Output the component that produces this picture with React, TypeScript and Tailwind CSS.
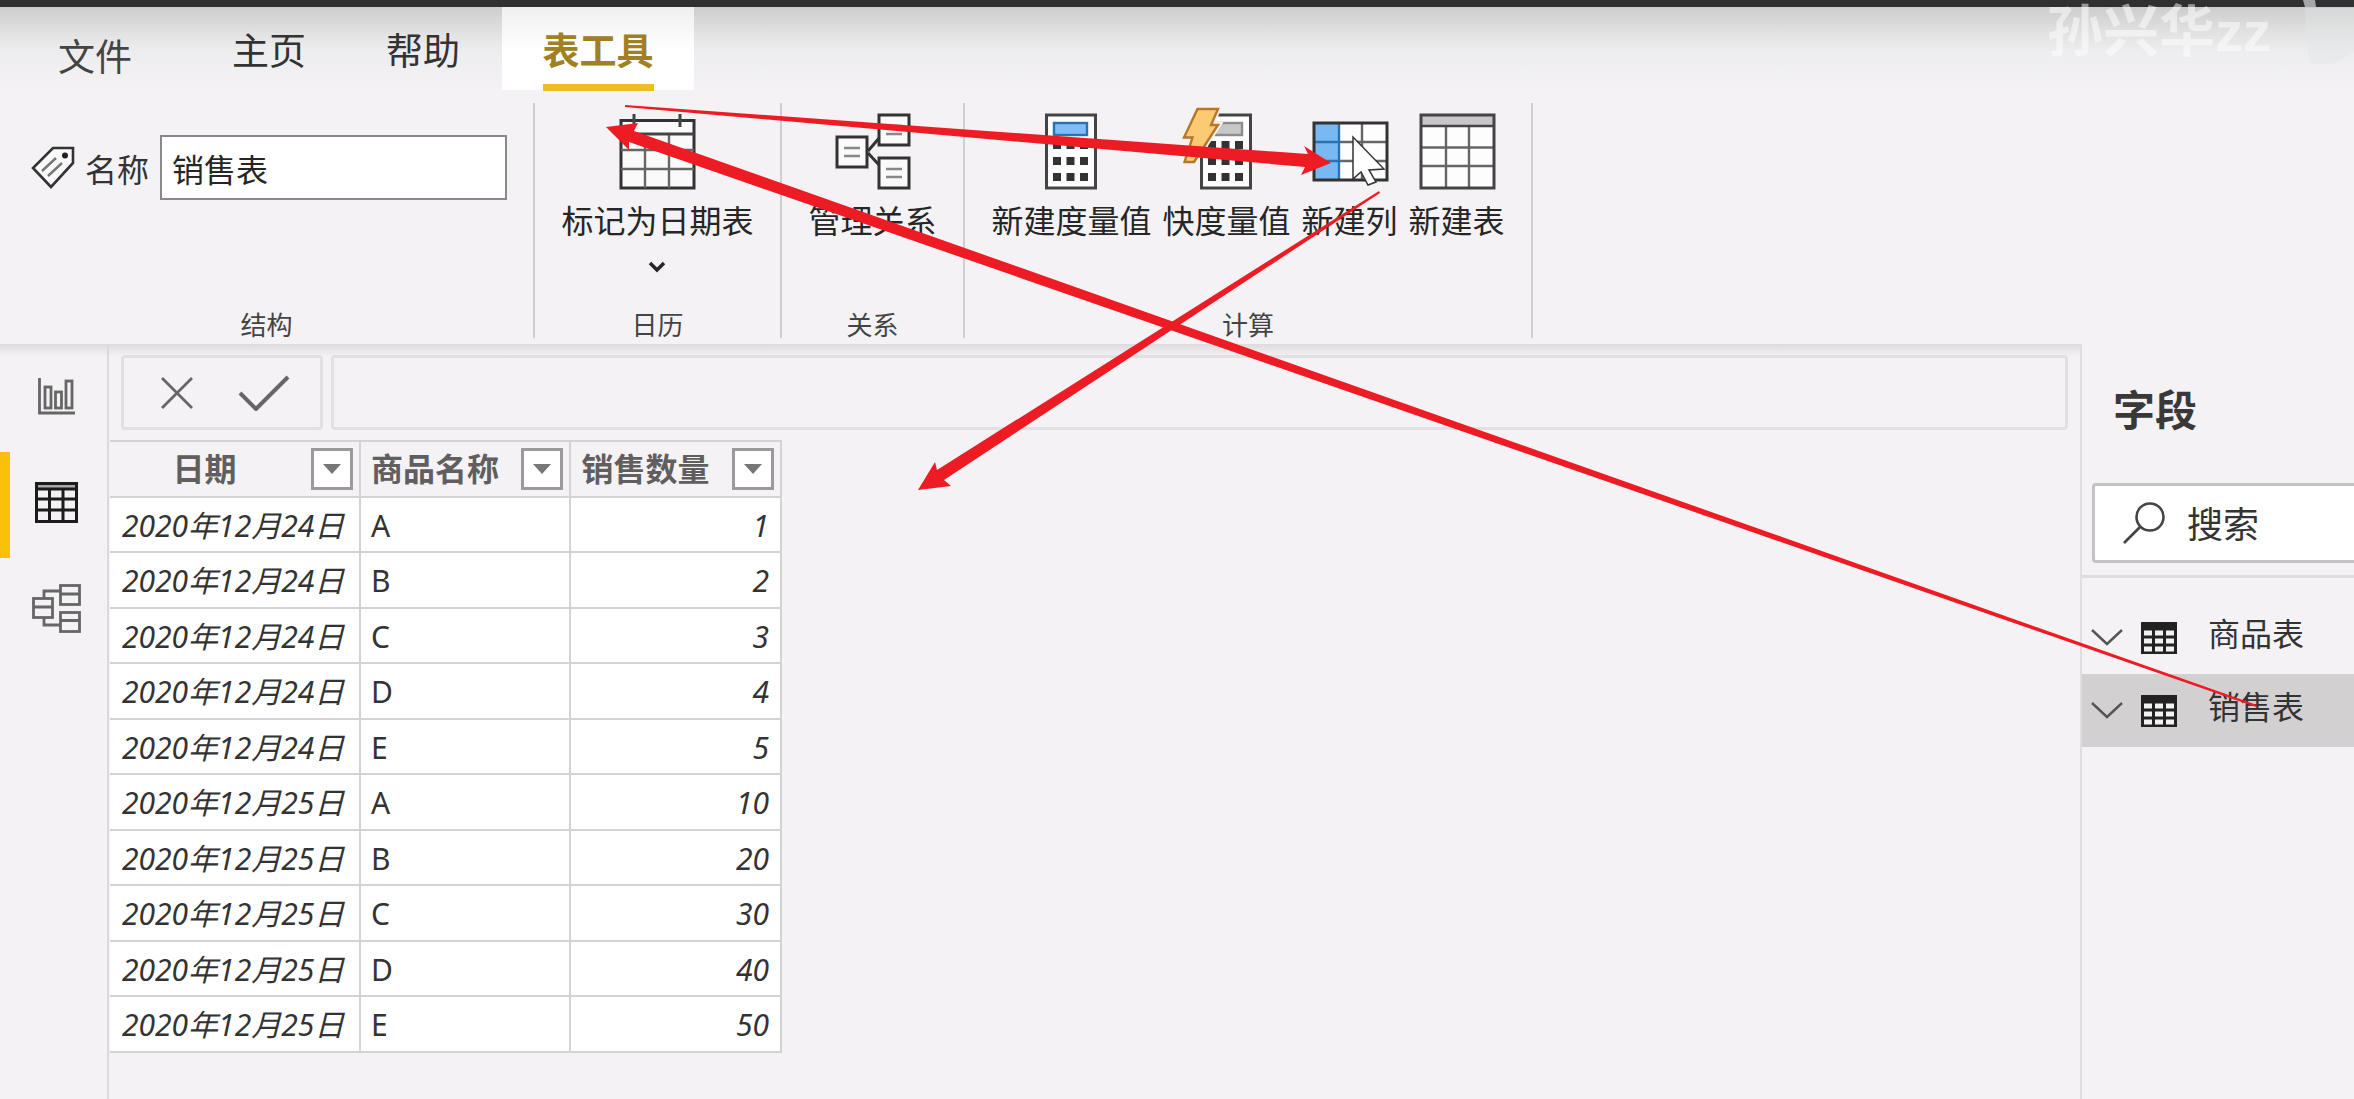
import type { ReactNode } from 'react';

const CJK = "font-['Noto_Sans_CJK_SC',sans-serif]";

const rows: [string, string, number][] = [
  ['2020年12月24日', 'A', 1],
  ['2020年12月24日', 'B', 2],
  ['2020年12月24日', 'C', 3],
  ['2020年12月24日', 'D', 4],
  ['2020年12月24日', 'E', 5],
  ['2020年12月25日', 'A', 10],
  ['2020年12月25日', 'B', 20],
  ['2020年12月25日', 'C', 30],
  ['2020年12月25日', 'D', 40],
  ['2020年12月25日', 'E', 50],
];

const columns = [
  { title: '日期', width: 'w-[251px]' },
  { title: '商品名称', width: 'w-[210px]' },
  { title: '销售数量', width: 'w-[211px]' },
];

/* ---------- ribbon icons, all on a 76px square ---------- */

function RibbonIcon({ children }: { children: ReactNode }) {
  return (
    <svg viewBox="0 0 76 76" className="size-[76px] shrink-0 overflow-visible" fill="none" aria-hidden="true">
      {children}
    </svg>
  );
}

function CalendarIcon() {
  return (
    <RibbonIcon>
      <rect x="2" y="7.5" width="73" height="67.5" fill="#fbfafb" stroke="#333" strokeWidth="3" />
      <path d="M26 21v54M50 21v54M2 37h73M2 56h73" stroke="#666" strokeWidth="2.4" />
      <path d="M2 21h73" stroke="#444" strokeWidth="3" />
      <path d="M15 1v13M61 1v13" stroke="#444" strokeWidth="3" />
    </RibbonIcon>
  );
}

function RelationsIcon() {
  return (
    <RibbonIcon>
      <path d="M34 38 46 24M34 40l12 13" stroke="#333" strokeWidth="3" />
      <g fill="#fbfafb" stroke="#333" strokeWidth="3">
        <rect x="3" y="24" width="30" height="30" />
        <rect x="45" y="2" width="30" height="30" />
        <rect x="45" y="45" width="30" height="30" />
      </g>
      <path d="M10 35h16M10 43h16M52 13h16M52 21h16M52 56h16M52 64h16" stroke="#888" strokeWidth="2.6" />
    </RibbonIcon>
  );
}

function CalculatorBody({ screen, border }: { screen: string; border: string }) {
  return (
    <>
      <rect x="13.5" y="2" width="49" height="73" fill="#fdfdfd" stroke="#444" strokeWidth="3" />
      <rect x="21" y="10" width="33" height="12" fill={screen} stroke={border} strokeWidth="2.4" />
      {[28, 44, 60].map((y) =>
        [20, 33.5, 47].map((x) => <rect key={`${x}-${y}`} x={x} y={y} width="8" height="8" fill="#333" />),
      )}
    </>
  );
}

function MeasureIcon() {
  return (
    <RibbonIcon>
      <CalculatorBody screen="#80bdf8" border="#2a72b0" />
    </RibbonIcon>
  );
}

function QuickMeasureIcon() {
  const bolt = 'M9.5-4H30L23 12h7L6 49h-9.5L4.5 24.500H-4z';
  return (
    <RibbonIcon>
      <CalculatorBody screen="#c8c8c8" border="#8c8c8c" />
      <path d={bolt} stroke="#f6f3f2" strokeWidth="6" />
      <path d={bolt} fill="#fdca74" stroke="#b9752a" strokeWidth="2.4" />
    </RibbonIcon>
  );
}

function NewColumnIcon() {
  return (
    <RibbonIcon>
      <rect x="2" y="10" width="73" height="57" fill="#fdfdfd" />
      <rect x="2" y="10" width="25" height="57" fill="#79b9f2" />
      <path d="M50 10v57M27 29h48M27 48h48" stroke="#666" strokeWidth="2.4" />
      <path d="M27 10v57M2 29h25M2 48h25" stroke="#2a72b0" strokeWidth="2.4" />
      <rect x="2" y="10" width="73" height="57" stroke="#333" strokeWidth="3" />
    </RibbonIcon>
  );
}

function NewTableIcon() {
  return (
    <RibbonIcon>
      <rect x="2" y="2" width="73" height="73" fill="#fdfdfd" />
      <rect x="2" y="2" width="73" height="11" fill="#c8c6c8" />
      <path d="M27 13v62M50 13v62M2 34.5h73M2 53h73" stroke="#666" strokeWidth="2.4" />
      <path d="M2 13h73" stroke="#444" strokeWidth="2.4" />
      <rect x="2" y="2" width="73" height="73" stroke="#444" strokeWidth="3" />
    </RibbonIcon>
  );
}

function TagIcon() {
  return (
    <svg viewBox="0 0 44 43" className="h-[43px] w-[44px] shrink-0" fill="none" aria-hidden="true">
      <path d="M22 2h20v15L20 41 2 22z" fill="#fbfafb" stroke="#333" strokeWidth="2.6" />
      <circle cx="34" cy="9.5" r="3" fill="#222" />
      <path d="M11 25 25 12M17 30l14-13" stroke="#777" strokeWidth="2.4" />
    </svg>
  );
}

/* ---------- side bar icons ---------- */

function ReportIcon() {
  return (
    <svg viewBox="0 0 37 37" className="size-[37px]" fill="none" stroke="#666" strokeWidth="2.8" aria-hidden="true">
      <path d="M1.500 0v35H37" />
      <rect x="7" y="9" width="6" height="21" />
      <rect x="17.5" y="14" width="6" height="16" />
      <rect x="28" y="3" width="6" height="27" />
    </svg>
  );
}

function DataIcon() {
  return (
    <svg viewBox="0 0 43 41" className="h-[41px] w-[43px]" fill="none" stroke="#1c1c1c" strokeWidth="3" aria-hidden="true">
      <rect x="2" y="2" width="39" height="5" fill="#aaa" stroke="none" />
      <rect x="1.5" y="1.5" width="40" height="38" />
      <path d="M1 7h41M1 17h41M1 28h41M14.500 7v33M28 7v33" />
    </svg>
  );
}

function ModelIcon() {
  return (
    <svg viewBox="0 0 49 49" className="size-[49px]" fill="none" stroke="#666" strokeWidth="2.8" aria-hidden="true">
      <rect x="1.5" y="14.5" width="19" height="19" />
      <rect x="28.5" y="1.5" width="19" height="19" />
      <rect x="28.5" y="28.5" width="19" height="19" />
      <path d="M1 23h20M28 10h20M28 36.500h20M12 14V7h16M12 34v7h16" />
    </svg>
  );
}

/* ---------- ribbon ---------- */

function RibbonGroup({ name, width, children }: { name: string; width: string; children: ReactNode }) {
  return (
    <section aria-label={name} className={`flex flex-col border-r-2 border-[#cfcdcf] ${width}`}>
      {children}
      <h2 className="mt-auto text-center text-[26px] leading-7 text-[#444]">{name}</h2>
    </section>
  );
}

function RibbonButton({ label, icon, menu }: { label: string; icon: ReactNode; menu?: boolean }) {
  return (
    <button type="button" className="flex flex-col items-center whitespace-nowrap text-[32px] leading-10 text-[#262626]">
      {icon}
      <span className="mt-[10px]">{label}</span>
      {menu && (
        <svg viewBox="0 0 18 12" className="mt-[22px] h-3 w-[18px]" fill="none" stroke="#262626" strokeWidth="3.5" aria-hidden="true">
          <path d="m2 2 7 7 7-7" />
        </svg>
      )}
    </button>
  );
}

function Header() {
  return (
    <header className="bg-[linear-gradient(to_bottom,#cecdce,#e3e2e3_26px,#edecee_44px,#f4f2f4_84px)]">
      <nav aria-label="功能区" className="flex h-[83px] items-stretch pl-[58px] text-[37px] leading-[44px] text-[#333]">
        <button type="button" className="pt-3 text-[#444]">文件</button>
        <button type="button" className="ml-[100px]">主页</button>
        <button type="button" className="ml-20">帮助</button>
        <button
          type="button"
          className="ml-[42px] flex w-[192px] flex-col items-center bg-[linear-gradient(to_bottom,#efefef,#ffffff_44px)] pt-5 font-bold text-[#a08020]"
        >
          表工具
          <span className="mt-[13px] h-[7px] w-[111px] shrink-0 bg-[#efbd22]" />
        </button>
      </nav>
      <div className="flex h-[254px] pt-[13px] pb-[6px]">
        <RibbonGroup name="结构" width="w-[535px]">
          <div className="mt-8 flex items-center pl-[31px] text-[32px] text-[#333]">
            <TagIcon />
            <label htmlFor="table-name" className="ml-[10px]">名称</label>
            <input
              id="table-name"
              defaultValue="销售表"
              className="ml-[11px] h-[65px] w-[347px] border-2 border-[#8a8889] bg-white pl-[10px] text-[#262626] outline-none"
            />
          </div>
        </RibbonGroup>
        <RibbonGroup name="日历" width="w-[247px]">
          <div className="flex justify-center pt-[10px]">
            <RibbonButton label="标记为日期表" icon={<CalendarIcon />} menu />
          </div>
        </RibbonGroup>
        <RibbonGroup name="关系" width="w-[183px]">
          <div className="flex justify-center pt-[10px]">
            <RibbonButton label="管理关系" icon={<RelationsIcon />} />
          </div>
        </RibbonGroup>
        <RibbonGroup name="计算" width="w-[568px]">
          <div className="flex justify-center gap-[11px] pt-[10px]">
            <RibbonButton label="新建度量值" icon={<MeasureIcon />} />
            <RibbonButton label="快度量值" icon={<QuickMeasureIcon />} />
            <RibbonButton label="新建列" icon={<NewColumnIcon />} />
            <RibbonButton label="新建表" icon={<NewTableIcon />} />
          </div>
        </RibbonGroup>
      </div>
    </header>
  );
}

/* ---------- body ---------- */

function SideBar() {
  const item = 'flex h-[106px] items-center border-l-[10px] pr-1 pb-[6px] justify-center';
  return (
    <nav aria-label="视图" className="flex w-[109px] shrink-0 flex-col border-r-2 border-[#dbd9db] pt-[2px]">
      <button type="button" aria-label="报表" className={`${item} border-transparent`}><ReportIcon /></button>
      <button type="button" aria-label="数据" className={`${item} border-[#f9c10c]`}><DataIcon /></button>
      <button type="button" aria-label="模型" className={`${item} border-transparent`}><ModelIcon /></button>
    </nav>
  );
}

function FormulaBar() {
  return (
    <div className="flex h-[75px] gap-2 px-3">
      <div className="flex w-[202px] shrink-0 items-center rounded-sm border-[3px] border-[#e2e0e2] bg-[#f4f2f4] pl-9">
        <button type="button" aria-label="取消">
          <svg viewBox="0 0 34 34" className="size-[34px]" fill="none" stroke="#666" strokeWidth="2.8" aria-hidden="true">
            <path d="m2 2 30 30M32 2 2 32" />
          </svg>
        </button>
        <button type="button" aria-label="提交" className="ml-11">
          <svg viewBox="0 0 52 36" className="h-9 w-[52px]" fill="none" stroke="#666" strokeWidth="4" aria-hidden="true">
            <path d="m2 18 16 16L50 2" />
          </svg>
        </button>
      </div>
      <input aria-label="公式" className="min-w-0 flex-1 rounded-sm border-[3px] border-[#e2e0e2] bg-[#f4f2f4] px-3 text-[30px] outline-none" />
    </div>
  );
}

function DataTable() {
  return (
    <table className="mt-[10px] ml-px w-[672px] table-fixed border-separate border-spacing-0 border-t-2 border-[#d5d2d5] font-['Noto_Sans','Noto_Sans_CJK_SC',sans-serif] text-[30px] leading-10 text-[#333]">
      <thead>
        <tr>
          {columns.map((c) => (
            <th key={c.title} className={`h-14 border-r-2 border-b-2 border-[#d5d2d5] p-0 ${c.width}`}>
              <div className="flex items-center pr-[6px] pl-[10px] font-['Noto_Sans_CJK_SC',sans-serif] text-[32px] text-[#605e5e]">
                <span className="flex-1 pb-1 text-center whitespace-nowrap">{c.title}</span>
                <button
                  type="button"
                  aria-label={`筛选${c.title}`}
                  className="ml-[22px] flex size-[42px] shrink-0 items-center justify-center border-[3px] border-[#9b999b] bg-white"
                >
                  <svg viewBox="0 0 18 10" className="h-[10px] w-[18px]" fill="#777" aria-hidden="true">
                    <path d="M0 0h18L9 10z" />
                  </svg>
                </button>
              </div>
            </th>
          ))}
        </tr>
      </thead>
      <tbody>
        {rows.map(([date, product, amount], i) => (
          <tr key={i} className="bg-white odd:h-[55px] even:h-14">
            <td className="border-r-2 border-b-2 border-[#d5d2d5] pt-[2px] pr-0 pb-0 pl-3 whitespace-nowrap italic">{date}</td>
            <td className="border-r-2 border-b-2 border-[#d5d2d5] pt-[2px] pr-0 pb-0 pl-[10px]">{product}</td>
            <td className="border-r-2 border-b-2 border-[#d5d2d5] pt-[2px] pr-[11px] pb-0 pl-0 text-right italic">{amount}</td>
          </tr>
        ))}
      </tbody>
    </table>
  );
}

function FieldItem({ name, selected }: { name: string; selected?: boolean }) {
  return (
    <li className={selected ? 'bg-[#d3d0d2]' : ''}>
      <button type="button" className="flex h-[73px] w-full items-center pb-[6px] pl-[9px] text-left text-[32px] leading-10 text-[#333]">
        <svg viewBox="0 0 32 17" className="mt-[5px] h-[17px] w-8" fill="none" stroke="#555" strokeWidth="2.4" aria-hidden="true">
          <path d="m1 1 15 14L31 1" />
        </svg>
        <svg viewBox="0 0 36 32" className="mt-[6px] ml-[18px] h-8 w-9" aria-hidden="true">
          <rect width="36" height="32" fill="#222" />
          {[8.5, 16.5, 24.5].map((y) =>
            [3, 14, 25].map((x) => <rect key={`${x}-${y}`} x={x} y={y} width="8" height="5" fill="#f3f1f3" />),
          )}
        </svg>
        <span className="ml-[31px] pb-[6px]">{name}</span>
      </button>
    </li>
  );
}

function FieldsPane() {
  return (
    <aside className="w-[274px] shrink-0 overflow-hidden border-l-2 border-[#e0dee0] bg-[#f4f2f4]">
      <h2 className="mt-9 ml-[31px] text-[42px] leading-[56px] font-bold text-[#3b3938]">字段</h2>
      <label className="mt-[47px] ml-[10px] flex h-20 items-center rounded-l border-[3px] border-r-0 border-[#c5c2c4] bg-white pl-7">
        <svg viewBox="0 0 42 42" className="size-[42px] shrink-0" fill="none" stroke="#444" strokeWidth="2.6" aria-hidden="true">
          <circle cx="27" cy="15" r="13.5" />
          <path d="M17.500 24.500 1 41" />
        </svg>
        <input
          type="search"
          aria-label="搜索"
          placeholder="搜索"
          className="mb-[2px] ml-[22px] h-14 w-full min-w-0 bg-transparent text-[36px] outline-none placeholder:text-[#333]"
        />
      </label>
      <ul className="mt-3 border-t-[3px] border-[#dfdddf] pt-[23px]">
        <FieldItem name="商品表" />
        <FieldItem name="销售表" selected />
      </ul>
    </aside>
  );
}

/* ---------- annotations drawn over the window ---------- */

function Annotations() {
  return (
    <svg viewBox="0 0 2354 1099" width="2354" height="1099" className="pointer-events-none absolute top-0 left-0" aria-hidden="true">
      <path d="M1353 137v42l8-7 7 13 8-3-7-12 15-1z" fill="#fff" stroke="#333" strokeWidth="1.5" />
      <g fill="#ed1c24">
        <path d="M625 105 1308 154 1304 146 1331 163 1301 175 1305 167 625 107z" />
        <path d="M2257 705 634 131 638 123 606 127 629 150 629 142 2256 707z" />
        <path d="M1379 191 937 470 935 462 918 490 951 486 944 480 1380 193z" />
      </g>
    </svg>
  );
}

function Watermark() {
  return (
    <div
      className="pointer-events-none absolute top-0 right-0 flex font-['Liberation_Sans','Noto_Sans_CJK_SC',sans-serif] text-[56px] leading-[64px] font-bold text-white/50"
      aria-hidden="true"
    >
      <span className="mr-8">孙兴华zz</span>
      <svg viewBox="0 0 51 66" className="h-[66px] w-[51px]">
        <path d="M0 0h12l1 7H2z" fill="#a6a6a6" />
        <path d="M2 8h49v44L30 64H6z" fill="#e2e5e5" fillOpacity=".4" />
      </svg>
    </div>
  );
}

export default function App() {
  return (
    <div className={`relative flex min-h-screen flex-col overflow-hidden bg-[#f4f2f4] ${CJK}`}>
      <div className="h-[7px] bg-[#303030]" />
      <Header />
      <div className="flex flex-1">
        <div className="flex min-w-0 flex-1 bg-[linear-gradient(to_bottom,#dddbdd,#eceaec_8px,#f4f2f4_13px)]">
          <SideBar />
          <main className="min-w-0 flex-1 pt-[11px]">
            <FormulaBar />
            <DataTable />
          </main>
        </div>
        <FieldsPane />
      </div>
      <Watermark />
      <Annotations />
    </div>
  );
}
